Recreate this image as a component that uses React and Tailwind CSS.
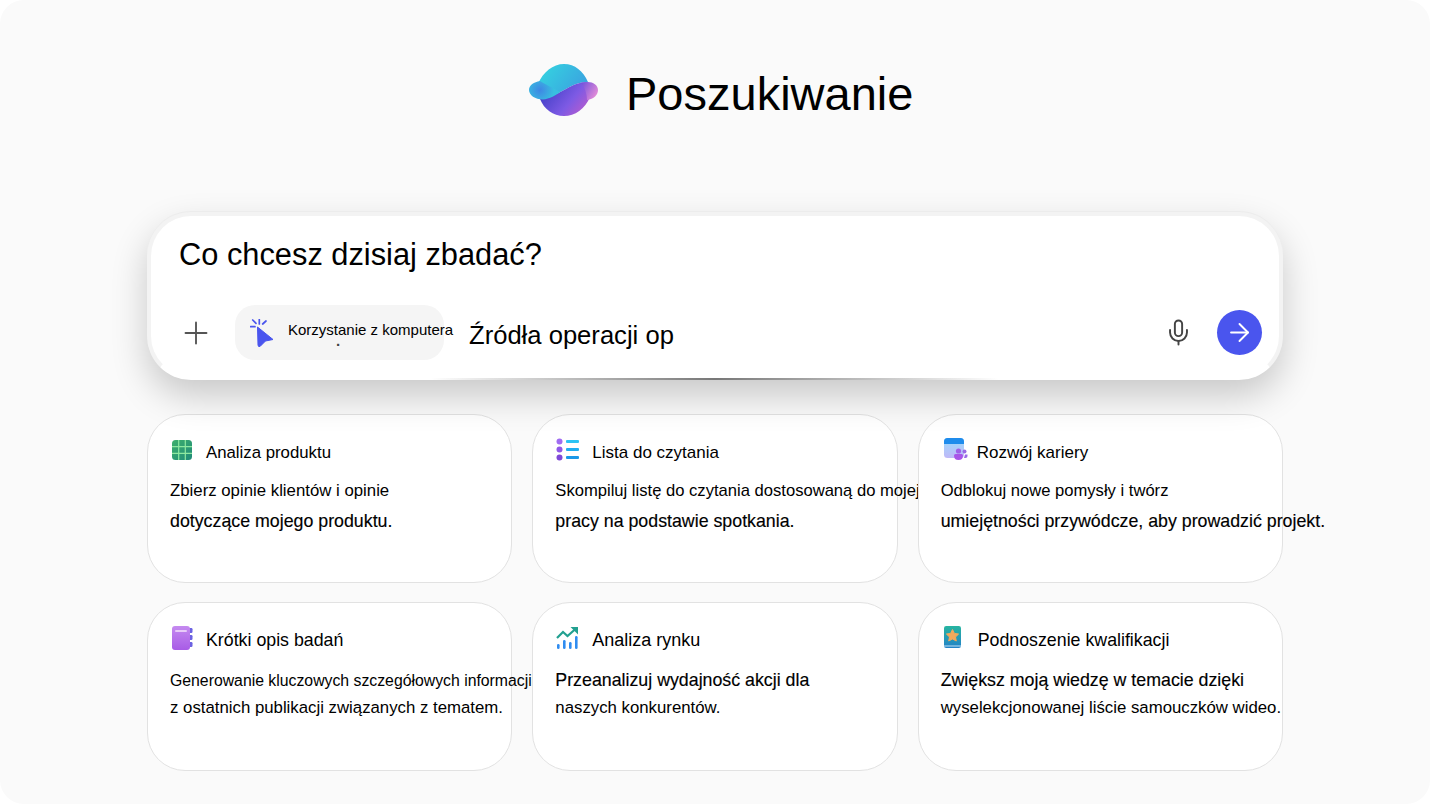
import React from 'react';
import { Plus, Mic, ArrowRight } from 'lucide-react';

function PlanetLogo() {
  return (
    <svg width="70" height="52" viewBox="0 0 70 52" fill="none" className="shrink-0">
      <defs>
        <linearGradient id="planetTop" x1="20" y1="0" x2="50" y2="24" gradientUnits="userSpaceOnUse">
          <stop offset="0" stopColor="#35cfe0" />
          <stop offset="1" stopColor="#3aa6e0" />
        </linearGradient>
        <linearGradient id="planetBottom" x1="18" y1="24" x2="52" y2="52" gradientUnits="userSpaceOnUse">
          <stop offset="0" stopColor="#4440c8" />
          <stop offset="0.6" stopColor="#7d5ae4" />
          <stop offset="1" stopColor="#b35cd0" />
        </linearGradient>
        <radialGradient id="leftGlow" cx="11" cy="26" r="14" gradientUnits="userSpaceOnUse">
          <stop offset="0" stopColor="#3f86e4" />
          <stop offset="1" stopColor="#38bfe0" />
        </radialGradient>
        <linearGradient id="rightGlow" x1="52" y1="18" x2="69" y2="28" gradientUnits="userSpaceOnUse">
          <stop offset="0" stopColor="#6d4fdc" />
          <stop offset="1" stopColor="#e08ad8" />
        </linearGradient>
      </defs>
      <path d="M9 20 C14 8 24 0 35 0 C46 0 54 7 59 18 C50 18 44 21 37 25 C28 30 20 34 11 35 Z" fill="url(#planetTop)" />
      <path d="M11 35 C20 34 28 30 37 25 C44 21 50 18 59 18 L61 33 C56 45 46 52 35 52 C24 52 15 45 11 35 Z" fill="url(#planetBottom)" />
      <path d="M11 17 C5 18 0 21 0 26 C0 31 6 35.5 14 35.5 C20 35 28 31 31 28 C24 24 16 20 11 17 Z" fill="url(#leftGlow)" />
      <path d="M52 18.8 C54 18.2 57 18 59 18 C64 18 69 21 69 26 C69 31 65 35 58 36 C58 30 56 24 52 18.8 Z" fill="url(#rightGlow)" />
    </svg>
  );
}

function CursorIcon() {
  return (
    <svg width="26" height="28" viewBox="0 0 26 28" fill="none" className="shrink-0">
      <path d="M7.5 8 L23 20.5 L15.5 22 L10 27.5 Q8 28 8 26 Z" fill="#4a55ee" stroke="#4a55ee" strokeLinejoin="round" />
      <path d="M9.3 0.5 L9.3 5 M2.7 1 L6 4.3 M16 2 L12.7 5 M0.5 7.7 L5 7.7" stroke="#4a55ee" strokeWidth="1.7" strokeLinecap="round" />
    </svg>
  );
}

function GridIcon() {
  return (
    <svg width="20" height="20" viewBox="0 0 20 20" className="shrink-0">
      <defs>
        <linearGradient id="sheetGrad" x1="0" y1="0" x2="20" y2="20" gradientUnits="userSpaceOnUse">
          <stop offset="0" stopColor="#3fb06d" />
          <stop offset="1" stopColor="#1f8a78" />
        </linearGradient>
      </defs>
      <rect width="20" height="20" rx="3.5" fill="url(#sheetGrad)" />
      <path d="M6.7 0 V20 M13.3 0 V20 M0 6.7 H20 M0 13.3 H20" stroke="#8ee8a0" strokeWidth="1.2" />
    </svg>
  );
}

function ListIcon() {
  return (
    <svg width="24" height="24" viewBox="0 0 24 24" className="shrink-0">
      <circle cx="3.5" cy="3.5" r="3" fill="#a06cf2" />
      <circle cx="3.5" cy="11.5" r="3" fill="#9058e8" />
      <circle cx="3.5" cy="19.5" r="3" fill="#7f48d8" />
      <rect x="10" y="2" width="13" height="3" rx="1" fill="#2cc4f4" />
      <rect x="10" y="10" width="13" height="3" rx="1" fill="#20aef0" />
      <rect x="10" y="18" width="13" height="3" rx="1" fill="#1a98e8" />
    </svg>
  );
}

function CalendarPeopleIcon() {
  return (
    <svg width="24" height="24" viewBox="0 0 24 24" className="shrink-0">
      <defs>
        <linearGradient id="calBody" x1="0" y1="5" x2="0" y2="20" gradientUnits="userSpaceOnUse">
          <stop offset="0" stopColor="#a4d4fb" />
          <stop offset="1" stopColor="#c0b8f8" />
        </linearGradient>
      </defs>
      <rect x="0" y="0" width="20" height="20" rx="3.5" fill="url(#calBody)" />
      <path d="M0 6 V3.5 A3.5 3.5 0 0 1 3.5 0 H16.5 A3.5 3.5 0 0 1 20 3.5 V6 Z" fill="#1f8cec" />
      <circle cx="20.5" cy="13.5" r="2" fill="#9a6ae6" />
      <circle cx="14.5" cy="13" r="2.6" fill="#a060e8" />
      <path d="M21 16.5 H23.5 V18 Q23.5 20 21.5 20 H20 Z" fill="#9a6ae6" />
      <path d="M10 17.5 Q10 16 11.5 16 H17.5 Q19 16 19 17.5 Q19 22 14.5 22 Q10 22 10 17.5 Z" fill="#a855e8" />
    </svg>
  );
}

function NotebookIcon() {
  return (
    <svg width="21" height="24" viewBox="0 0 21 24" className="shrink-0">
      <defs>
        <linearGradient id="noteGrad" x1="0" y1="0" x2="0" y2="24" gradientUnits="userSpaceOnUse">
          <stop offset="0" stopColor="#c58af0" />
          <stop offset="1" stopColor="#a85ce6" />
        </linearGradient>
      </defs>
      <rect x="16" y="2" width="4.5" height="5" rx="1.2" fill="#6c62e2" />
      <rect x="16" y="9" width="4.5" height="5" rx="1.2" fill="#6c62e2" />
      <rect x="16" y="16" width="4.5" height="5" rx="1.2" fill="#6c62e2" />
      <rect x="0" y="0" width="18" height="24" rx="3" fill="url(#noteGrad)" />
      <rect x="3" y="4" width="12" height="2" rx="1" fill="#e8ccf8" />
    </svg>
  );
}

function ChartIcon() {
  return (
    <svg width="23" height="22" viewBox="0 0 23 22" className="shrink-0">
      <path d="M1 11 L7 5 L11.5 9 L20 1.5" fill="none" stroke="#22a090" strokeWidth="2.2" />
      <path d="M14.5 0 H22 V7.5 Z" fill="#22a090" />
      <rect x="1" y="17" width="2.6" height="5" rx="1.3" fill="#2f8cf0" />
      <rect x="7" y="13" width="2.6" height="9" rx="1.3" fill="#2f8cf0" />
      <rect x="13" y="15" width="2.6" height="7" rx="1.3" fill="#2f8cf0" />
      <rect x="19" y="9" width="2.6" height="13" rx="1.3" fill="#2f8cf0" />
    </svg>
  );
}

function BookStarIcon() {
  return (
    <svg width="18" height="23" viewBox="0 0 18 23" className="shrink-0">
      <defs>
        <linearGradient id="bookGrad" x1="0" y1="0" x2="0" y2="22" gradientUnits="userSpaceOnUse">
          <stop offset="0" stopColor="#27b5a0" />
          <stop offset="1" stopColor="#2482c8" />
        </linearGradient>
      </defs>
      <rect x="0" y="0" width="17" height="22" rx="2.2" fill="url(#bookGrad)" />
      <rect x="0" y="19.5" width="17" height="1" fill="#bfe2f5" />
      <path d="M8.5 3.5 L10.4 7.4 L14.6 8 L11.5 11 L12.3 15 L8.5 13 L4.7 15 L5.5 11 L2.4 8 L6.6 7.4 Z" fill="#f3a95b" stroke="#f3a95b" strokeLinejoin="round" />
    </svg>
  );
}

const heavy = 'text-[17.8px] [-webkit-text-stroke:0.15px_black]';
const thin = 'text-[16.8px]';

const topLines = 'mt-[11px] leading-[30px]';
const bottomLines = 'mt-[14px] leading-[27px]';

const cards = [
  { icon: <GridIcon />, title: 'Analiza produktu', size: 'text-[16.8px]', gap: 'gap-[14px]', pad: 'pl-[24px]', line1: 'Zbierz opinie klientów i opinie', line2: 'dotyczące mojego produktu.', s1: thin, s2: heavy, lines: topLines },
  { icon: <ListIcon />, title: 'Lista do czytania', size: 'text-[17px]', gap: 'gap-[12px]', pad: 'pl-[23px]', line1: 'Skompiluj listę do czytania dostosowaną do mojej', line2: 'pracy na podstawie spotkania.', s1: 'text-[16.6px]', s2: heavy, lines: topLines },
  { icon: <CalendarPeopleIcon />, title: 'Rozwój kariery', size: 'text-[17px]', gap: 'gap-[9px]', pad: 'pl-[25px]', line1: 'Odblokuj nowe pomysły i twórz', line2: 'umiejętności przywódcze, aby prowadzić projekt.', s1: 'text-[16.6px]', s2: heavy, lines: topLines },
  { icon: <NotebookIcon />, title: 'Krótki opis badań', size: 'text-[17.8px]', gap: 'gap-[13px]', pad: 'pl-[24px]', line1: 'Generowanie kluczowych szczegółowych informacji', line2: 'z ostatnich publikacji związanych z tematem.', s1: 'text-[15.8px]', s2: thin, lines: bottomLines },
  { icon: <ChartIcon />, title: 'Analiza rynku', size: 'text-[18px]', gap: 'gap-[13px]', pad: 'pl-[23px]', line1: 'Przeanalizuj wydajność akcji dla', line2: 'naszych konkurentów.', s1: heavy, s2: thin, lines: bottomLines },
  { icon: <BookStarIcon />, title: 'Podnoszenie kwalifikacji', size: 'text-[17.8px]', gap: 'gap-[16px]', pad: 'pl-[25px]', line1: 'Zwiększ moją wiedzę w temacie dzięki', line2: 'wyselekcjonowanej liście samouczków wideo.', s1: heavy, s2: thin, lines: bottomLines },
];

function PromptCard({ card }) {
  return (
    <div className="h-[169px] rounded-[38px] border-[1.5px] border-[#e2e2e2] bg-white pt-[19.5px] text-black">
      <div className={`flex h-[30px] items-center ${card.gap} ${card.pad}`}>
        {card.icon}
        <span className={`mt-[6px] whitespace-nowrap ${card.size}`}>{card.title}</span>
      </div>
      <div className={`pl-[22px] whitespace-nowrap ${card.lines}`}>
        <div className={card.s1}>{card.line1}</div>
        <div className={card.s2}>{card.line2}</div>
      </div>
    </div>
  );
}

export default function App() {
  return (
    <div className="h-[804px] w-[1430px] overflow-hidden bg-white font-['Liberation_Sans',Arial,sans-serif]">
      <div className="h-full rounded-[24px] bg-[#fafafa] pt-[64px]">
        <div className="flex h-[60px] items-start gap-[27px] pl-[529px]">
          <PlanetLogo />
          <h1 className="text-[47px] leading-[60px] font-normal text-black">Poszukiwanie</h1>
        </div>

        <div className="mx-auto mt-[88px] w-[1136px]">
          <div className="relative h-[168px] rounded-[44px] border-[4px] border-[#f3f3f3] border-b-white bg-white pt-[19px] pr-[17px] pl-[28px] shadow-[0_-1px_0_#ececec,0_16px_36px_rgba(0,0,0,0.2)]">
            <div className="text-[30.8px] leading-[40px] text-black">Co chcesz dzisiaj zbadać?</div>
            <div className="mt-[30px] flex items-center">
              <Plus size={36} strokeWidth={1.25} className="-ml-[1px] shrink-0 text-[#555555]" />
              <div className="ml-[21px] flex h-[55px] w-[209px] shrink-0 items-start rounded-[20px] bg-[#f5f5f5] pt-[14px] pl-[15px]">
                <CursorIcon />
                <div className="mt-[1px] ml-[12px] text-[15px] leading-[19px] whitespace-nowrap text-black">
                  <div>Korzystanie z komputera</div>
                  <div className="ml-[48px] leading-[4px] font-bold text-[#444444]">.</div>
                </div>
              </div>
              <span className="mt-[6px] ml-[25px] text-[25.6px] whitespace-nowrap text-black">Źródła operacji op</span>
              <Mic size={29} strokeWidth={1.6} className="mr-[24px] ml-auto shrink-0 text-[#444444]" />
              <div className="flex h-[45px] w-[45px] shrink-0 items-center justify-center rounded-full bg-[#4a55ee]">
                <ArrowRight size={29} strokeWidth={1.6} className="text-white" />
              </div>
            </div>
            <div className="absolute right-[280px] -bottom-[4px] left-[280px] h-[2px] bg-gradient-to-r from-transparent via-[#777777] to-transparent" />
          </div>

          <div className="mt-[34px] grid grid-cols-3 gap-x-[20px] gap-y-[19px]">
            {cards.map(card => (
              <PromptCard key={card.title} card={card} />
            ))}
          </div>
        </div>
      </div>
    </div>
  );
}
